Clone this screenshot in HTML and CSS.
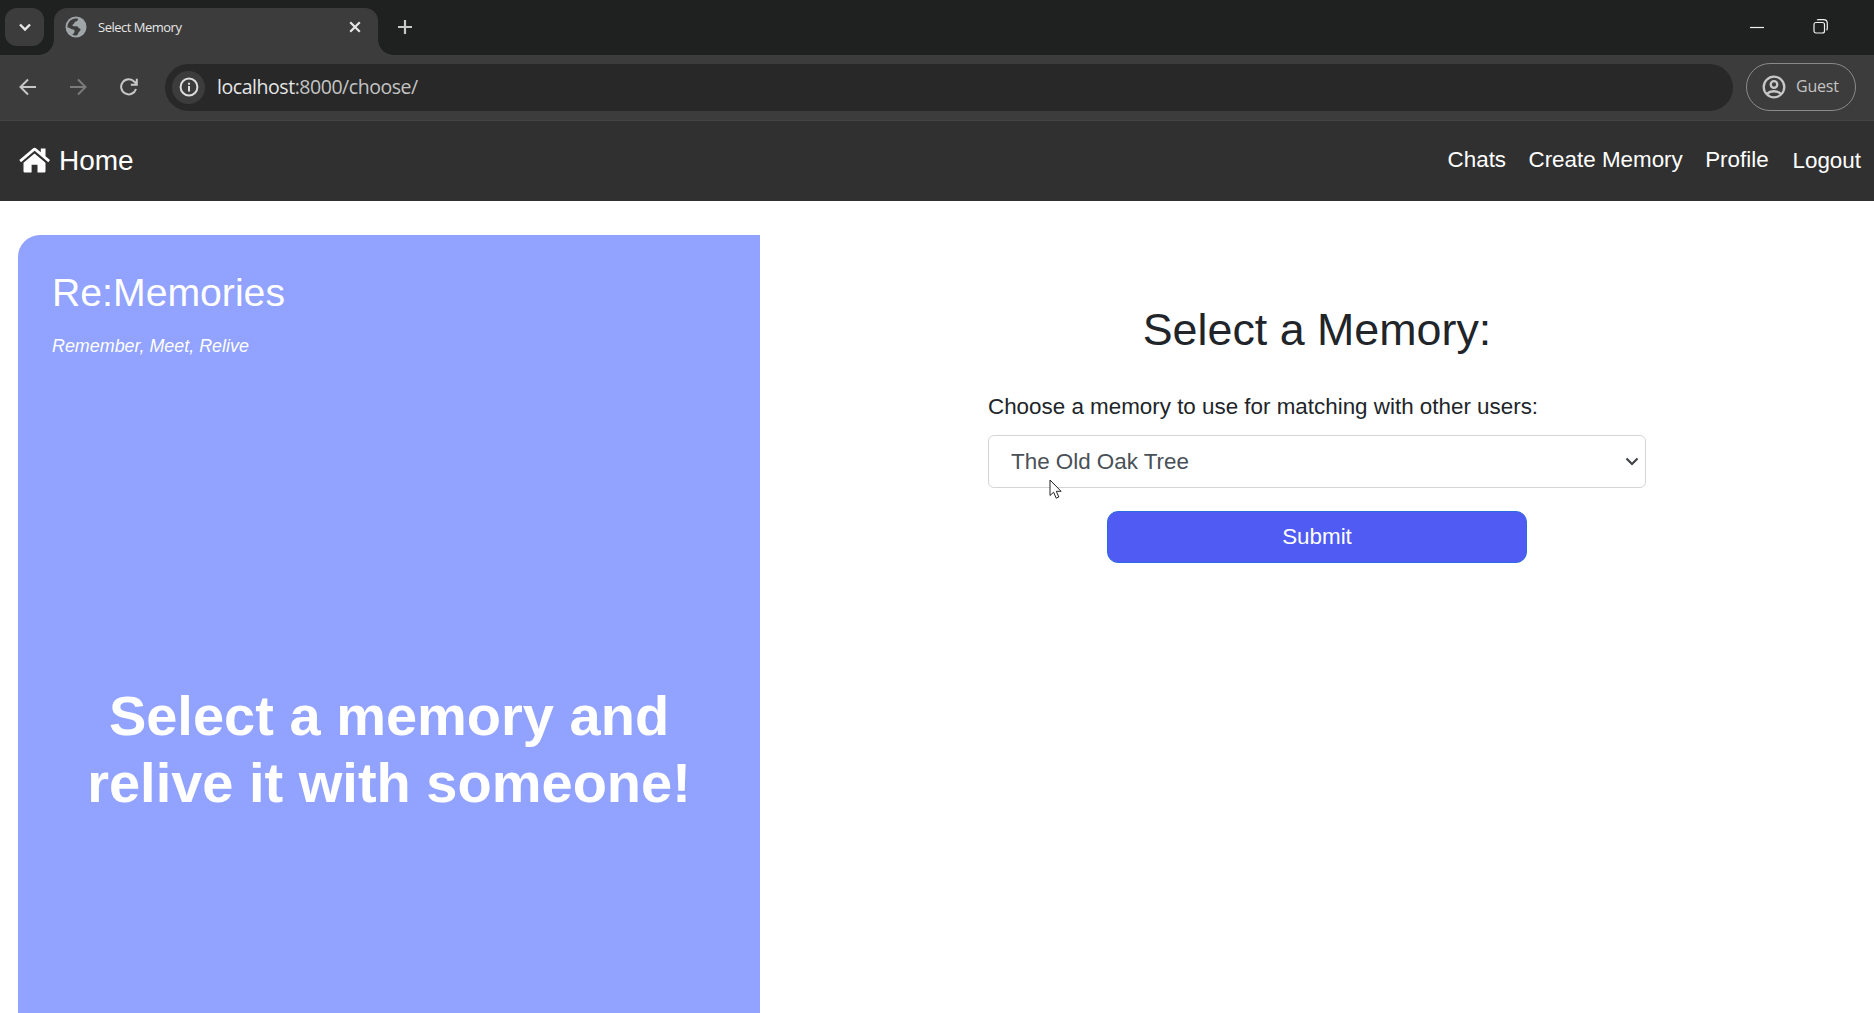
FILE: index.html
```html
<!DOCTYPE html>
<html lang="en">
<head>
  <meta charset="UTF-8" />
  <meta name="viewport" content="width=device-width, initial-scale=1" />
  <title>Select Memory</title>
  <link rel="stylesheet" href="styles.css">
</head>
<body>
  <!-- Browser window -->
  <div class="tab-bar">
    <button class="tab-search" aria-label="Search tabs">
      <svg width="14" height="14" viewBox="0 0 14 14"><path d="M2 4.5 7 9.5 12 4.5" /></svg>
    </button>
    <div class="tab">
      <svg class="globe" width="22" height="22" viewBox="0 0 22 22">
        <circle cx="11" cy="11" r="10.5" fill="#a0a5a7" />
        <path d="M13 2.7C13.2 4.5 12 5.3 10.6 5.6C9.3 6 9.6 7.6 8.3 8.2C7 8.8 7.2 10.2 8.8 10.3H11.6C13.2 10.4 13.2 12.2 14.6 12.6C16.2 13 15.8 14.6 14.4 15.4C13.2 16.2 13.4 18.2 11.6 19.5C10 19.7 8.4 19.3 7.2 18.7C8.6 17.6 9.8 16.6 9.6 15C9.4 13.4 7.6 13.6 6.4 13C5 12.3 4 11.6 2.5 11.6C2.2 7.4 4.9 3.6 9 2.7C10.4 2.4 11.8 2.4 13 2.7Z" fill="#3c3c3c" />
      </svg>
      <span class="tab-title">Select Memory</span>
      <svg class="tab-close" width="12" height="12" viewBox="0 0 12 12"><path d="M1.2 1.2 10.8 10.8M10.8 1.2 1.2 10.8" /></svg>
    </div>
    <svg class="new-tab" width="16" height="16" viewBox="0 0 16 16"><path d="M8 1V15M1 8H15" /></svg>
    <div class="window-buttons">
      <svg width="14" height="14" viewBox="0 0 14 14"><path d="M0 7.5H14" /></svg>
      <svg width="15" height="15" viewBox="0 0 15 15"><rect x="1" y="3.5" width="10.5" height="10.5" rx="2" /><path d="M4 1.2C4.5.7 5 .6 6 .6H10.5Q14.3.6 14.3 4.4V9C14.3 10 14.1 10.8 13.6 11.2" /></svg>
    </div>
  </div>

  <div class="toolbar">
    <svg class="back" width="18" height="18" viewBox="0 0 18 18"><path d="M17 9H2M9 1.5 1.5 9 9 16.5" /></svg>
    <svg class="forward" width="18" height="18" viewBox="0 0 18 18"><path d="M1 9H16M9 1.5 16.5 9 9 16.5" /></svg>
    <svg class="reload" width="18" height="18" viewBox="0 0 18 18"><path d="M16 11A7.6 7.6 0 1 1 14.5 3.8L16.6 6M16.8.8V6.8H10.8" /></svg>
    <div class="address">
      <span class="site-info">
        <svg width="20" height="20" viewBox="0 0 20 20"><circle cx="10" cy="10" r="8.4" /><path d="M10 9V14.4M10 5.7V7.7" /></svg>
      </span>
      <span class="url"><span class="host">localhost</span>:8000/choose/</span>
    </div>
    <div class="guest">
      <svg width="24" height="24" viewBox="0 0 24 24"><circle cx="12" cy="12" r="10.3" /><circle cx="12" cy="9.5" r="3.3" /><path d="M5 19C8.5 15.3 15.5 15.3 19 19" /></svg>
      <span>Guest</span>
    </div>
  </div>

  <!-- Site navigation -->
  <nav class="navbar">
    <a class="brand" href="#">
      <svg width="32" height="26" viewBox="0 0 32 26"><path d="M15.5 6.5 4.5 15.8V24.3Q4.5 25.5 5.7 25.5H12.6V17.8H18.5V25.5H25.3Q26.5 25.5 26.5 24.3V15.8Z" /><path d="M.3 13.1 13.9 1.4Q15.6 0 17.3 1.4L21.8 5.2V1.5H26.5V9.2L31 13.1 29.3 15.2 15.6 3.7 2 15.2Z" /></svg>
      <span>Home</span>
    </a>
    <div class="nav-links">
      <a href="#">Chats</a>
      <a href="#">Create Memory</a>
      <a href="#">Profile</a>
      <a class="logout" href="#">Logout</a>
    </div>
  </nav>

  <main class="content">
    <section class="banner">
      <h2>Re:Memories</h2>
      <p class="tagline">Remember, Meet, Relive</p>
      <h1>Select a memory and<br>relive it with someone!</h1>
    </section>
    <section class="choose">
      <form class="choose-form">
        <h2>Select a Memory:</h2>
        <label for="memory">Choose a memory to use for matching with other users:</label>
        <div class="select-wrap">
          <select id="memory" name="memory">
            <option>The Old Oak Tree</option>
          </select>
          <svg class="chevron" width="14" height="9" viewBox="0 0 14 9"><path d="M1.5 1.5 7 7 12.5 1.5" /></svg>
          <svg class="cursor" width="13" height="21" viewBox="0 0 13 21"><path d="M1 1V16.5L4.6 13.2 7.2 19.2 9.8 18 7.3 12.3H12.1Z" /></svg>
        </div>
        <button class="submit" type="button">Submit</button>
      </form>
    </section>
  </main>
</body>
</html>
```
FILE: styles.css
```css
* {
  box-sizing: border-box;
}

body {
  margin: 0;
  height: 100vh;
  overflow: hidden;
  display: flex;
  flex-direction: column;
  background-color: #fff;
  color: #212529;
  font-family: "Liberation Sans", Arial, sans-serif;
  font-size: 22.4px;
}

svg {
  display: block;
  flex: none;
  fill: none;
}

a {
  color: #fff;
  text-decoration: none;
}

/* browser tabs */
.tab-bar {
  height: 55px;
  flex: none;
  display: flex;
  align-items: flex-start;
  padding: 8px 0 0 5px;
  background-color: #1f2120;
  font-family: "Open Sans", sans-serif;
}

.tab-search {
  width: 39px;
  height: 38px;
  display: flex;
  align-items: center;
  justify-content: center;
  padding: 0;
  border: none;
  border-radius: 12px;
  background-color: #3c3c3c;
}

.tab-search svg {
  stroke: #e8e8e8;
  stroke-width: 2.4;
}

.tab {
  position: relative;
  width: 324px;
  height: 47px;
  margin-left: 10px;
  padding: 0 17px 9px 11px;
  display: flex;
  align-items: center;
  border-radius: 13px 13px 0 0;
  background-color: #3c3c3c;
}

.tab::before,
.tab::after {
  content: "";
  position: absolute;
  bottom: 0;
  width: 15px;
  height: 15px;
}

.tab::before {
  left: -15px;
  background: radial-gradient(circle at 0 0, transparent 14.5px, #3c3c3c 15px);
}

.tab::after {
  right: -15px;
  background: radial-gradient(circle at 100% 0, transparent 14.5px, #3c3c3c 15px);
}

.tab-title {
  flex: 1;
  margin-left: 11px;
  padding-bottom: 1px;
  color: #e6e6e6;
  font-size: 13px;
  line-height: 18px;
  letter-spacing: -0.5px;
}

.tab-close,
.new-tab {
  stroke: #e6e6e6;
  stroke-width: 2.2;
}

.new-tab {
  margin: 11px 0 0 19px;
  stroke: #c8c8c8;
}

.window-buttons {
  display: flex;
  align-items: center;
  gap: 49px;
  margin: 11px 46px 0 auto;
  stroke: #f0f0f0;
  stroke-width: 1.2;
}

/* address row */
.toolbar {
  height: 66px;
  flex: none;
  display: flex;
  align-items: center;
  padding: 0 18px 1px 19px;
  background-color: #3c3c3c;
  border-bottom: 1px solid #444;
  font-family: "Open Sans", sans-serif;
}

.toolbar > svg {
  margin-right: 32px;
  stroke: #c7c7c7;
  stroke-width: 2;
}

.toolbar > .forward {
  stroke: #7b7b7b;
}

.toolbar > .reload {
  margin: 0 27px 0 1px;
}

.address {
  flex: 1;
  height: 47px;
  display: flex;
  align-items: center;
  padding-left: 7px;
  border-radius: 24px;
  background-color: #282828;
}

.site-info {
  width: 33px;
  height: 33px;
  display: flex;
  align-items: center;
  justify-content: center;
  border-radius: 50%;
  background-color: #3c3c3c;
}

.site-info svg {
  stroke: #dedede;
  stroke-width: 2;
}

.url {
  margin-left: 12px;
  padding-bottom: 1px;
  color: #c4c4c4;
  font-size: 19.5px;
  letter-spacing: -0.45px;
}

.host {
  color: #e6e6e6;
}

.guest {
  width: 110px;
  height: 48px;
  display: flex;
  align-items: center;
  margin-left: 13px;
  padding-left: 15px;
  border: 1px solid #8a8a8a;
  border-radius: 24px;
  color: #c4c4c4;
  font-size: 16px;
}

.guest svg {
  margin-right: 10px;
  stroke: #c7c7c7;
  stroke-width: 2.3;
}

.guest span {
  padding-bottom: 2px;
  letter-spacing: -0.2px;
}

/* navbar */
.navbar {
  height: 80px;
  flex: none;
  display: flex;
  align-items: center;
  justify-content: space-between;
  padding: 0 13px 0 19px;
  background-color: #303030;
}

.brand {
  display: flex;
  align-items: center;
  font-size: 28px;
}

.brand svg {
  margin: 0 8px 2px 0;
  fill: #fff;
}

.nav-links {
  display: flex;
  align-items: center;
  gap: 22.4px;
  padding-bottom: 2px;
}

.nav-links .logout {
  margin-left: 1.5px;
  padding-top: 2px;
}

/* page */
.content {
  flex: 1;
  display: flex;
  padding: 34px 18px 0;
}

.banner {
  width: 742px;
  padding: 34px;
  border-top-left-radius: 22px;
  background-color: #91a2ff;
  color: #fff;
}

.banner h2 {
  margin: 0;
  font-size: 39.2px;
  font-weight: 400;
  line-height: 48px;
}

.tagline {
  margin: 16px 0 0;
  font-size: 17.9px;
  font-style: italic;
  line-height: 26px;
}

.banner h1 {
  margin: 323px 0 0;
  font-size: 56px;
  line-height: 67.2px;
  text-align: center;
}

.choose {
  flex: 1;
  display: flex;
  justify-content: center;
  padding-left: 18px;
}

.choose-form {
  width: 658px;
  padding-top: 67px;
}

.choose-form h2 {
  margin: 0 0 35px;
  font-size: 44.8px;
  font-weight: 400;
  line-height: 54px;
  text-align: center;
}

.choose-form label {
  display: block;
  margin-bottom: 12px;
  line-height: 32px;
}

.select-wrap {
  position: relative;
}

.choose-form select {
  display: block;
  width: 100%;
  height: 53px;
  padding: 0 22px;
  appearance: none;
  border: 1px solid #d3d6d9;
  border-radius: 6px;
  background-color: #fff;
  color: #495057;
  font: inherit;
}

.chevron {
  position: absolute;
  top: 22px;
  right: 7px;
  stroke: #404346;
  stroke-width: 2.2;
}

/* mouse pointer over the dropdown */
.cursor {
  position: absolute;
  top: 44px;
  left: 61px;
  fill: #fff;
  stroke: #222;
}

.submit {
  display: block;
  width: 420px;
  height: 52px;
  margin: 23px auto 0;
  border: 1px solid #2f6be0;
  border-radius: 11px;
  background-color: #4f5bf2;
  color: #fff;
  font: inherit;
}
```
